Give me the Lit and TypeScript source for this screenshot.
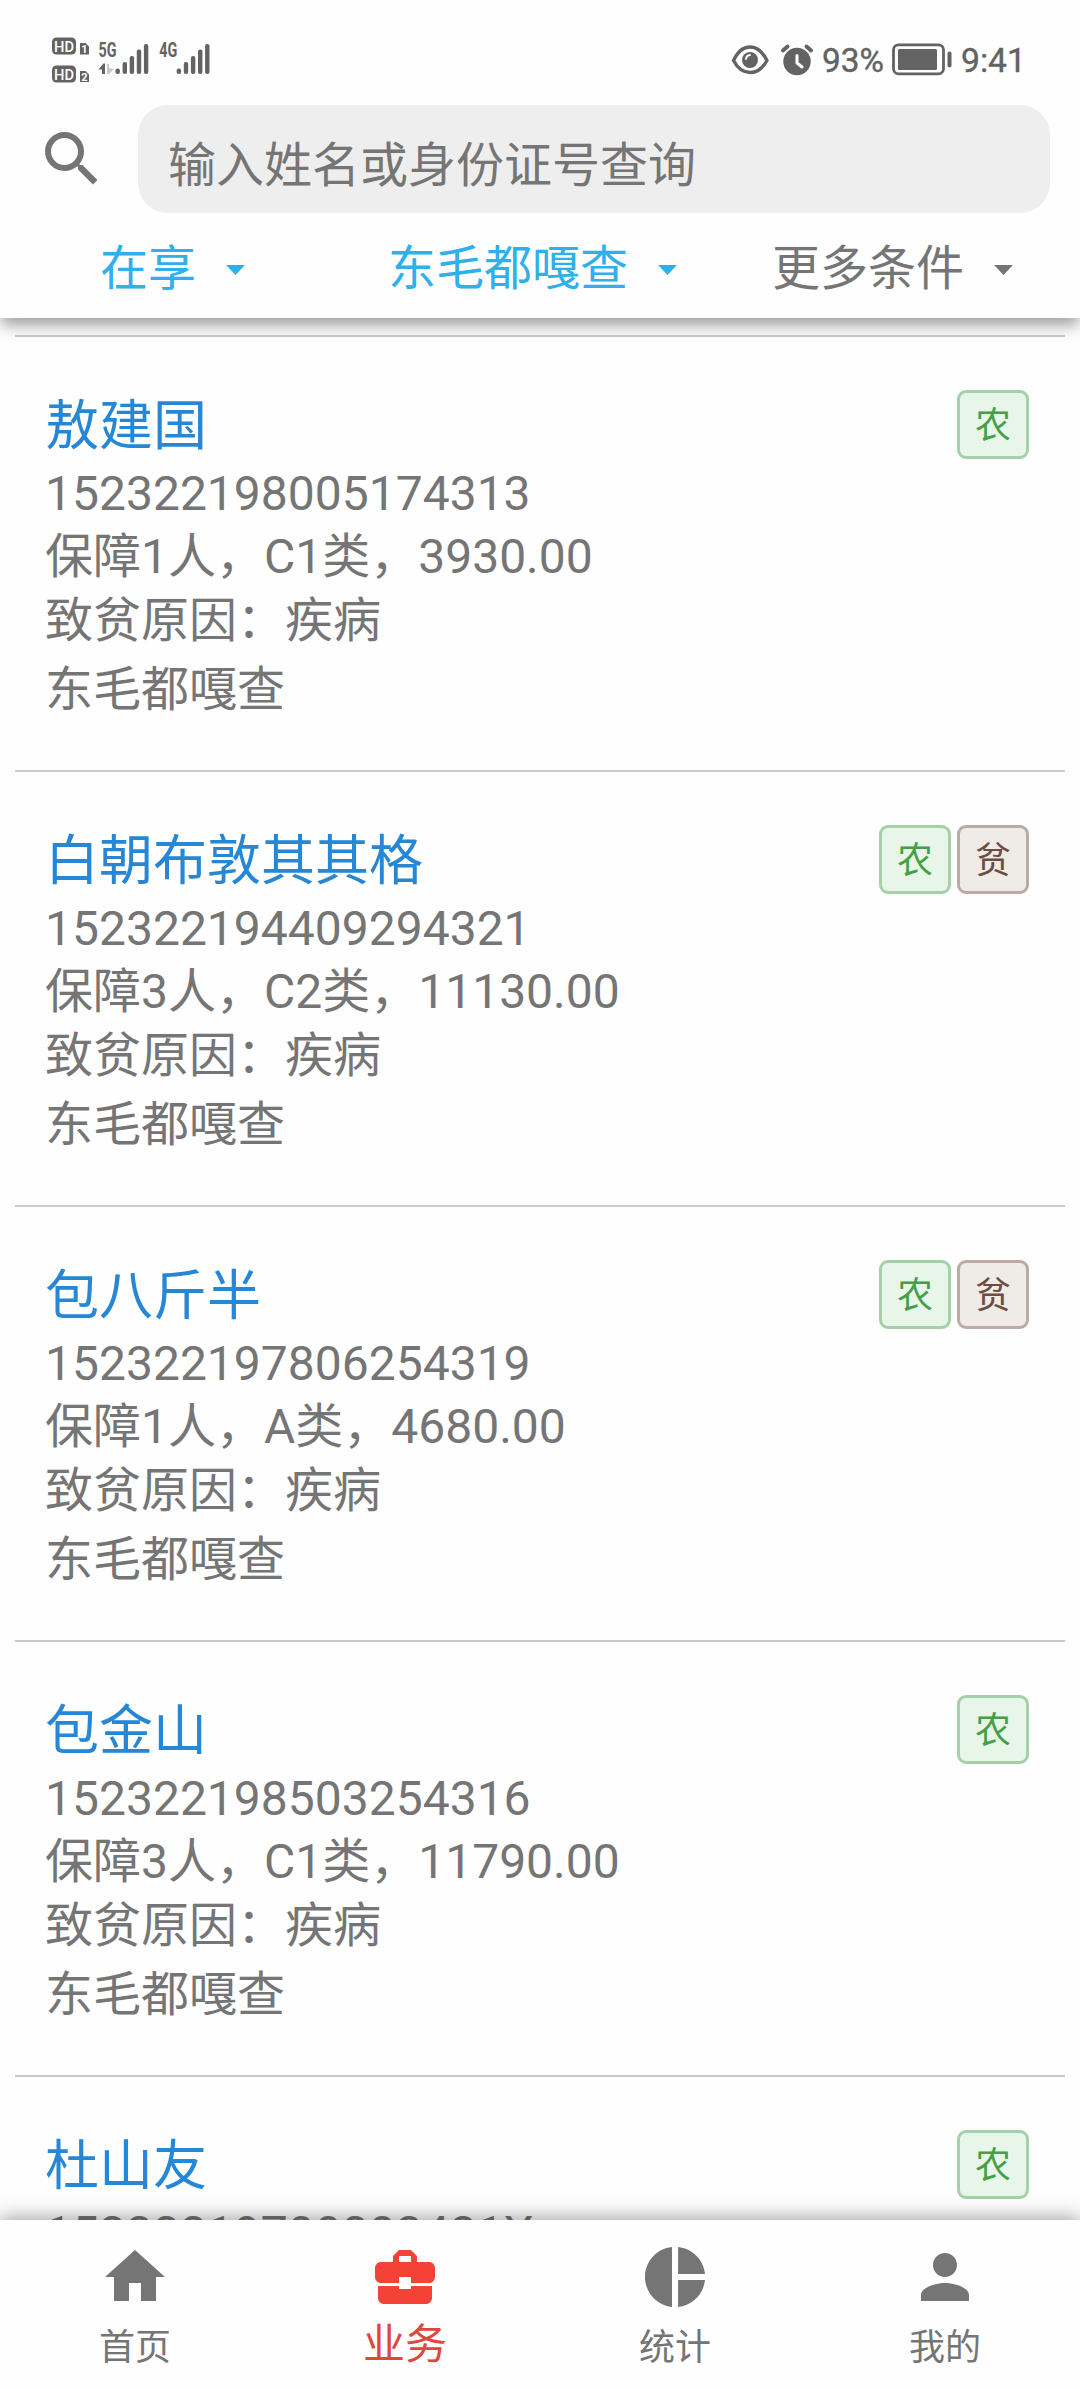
import { LitElement, html, css, svg, nothing } from "lit";
import { customElement, property } from "lit/decorators.js";

interface Person {
  name: string;
  id: string;
  summary?: string;
  reason?: string;
  place?: string;
  tags: string[];
}

const people: Person[] = [
  { name: "敖建国", id: "152322198005174313", summary: "保障1人，C1类，3930.00", reason: "疾病", place: "东毛都嘎查", tags: ["农"] },
  { name: "白朝布敦其其格", id: "152322194409294321", summary: "保障3人，C2类，11130.00", reason: "疾病", place: "东毛都嘎查", tags: ["农", "贫"] },
  { name: "包八斤半", id: "152322197806254319", summary: "保障1人，A类，4680.00", reason: "疾病", place: "东毛都嘎查", tags: ["农", "贫"] },
  { name: "包金山", id: "152322198503254316", summary: "保障3人，C1类，11790.00", reason: "疾病", place: "东毛都嘎查", tags: ["农"] },
  { name: "杜山友", id: "15232219700203431X", tags: ["农"] },
];

const tabs = [
  { label: "首页", path: "M10 20v-6h4v6h5v-8h3L12 3 2 12h3v8z" },
  { label: "业务", active: true, path: "M10 16v-1H3.01L3 19c0 1.11.89 2 2 2h14c1.11 0 2-.89 2-2v-4h-7v1h-4zm10-9h-4.01V5l-2-2h-4l-2 2v2H4c-1.1 0-2 .9-2 2v3c0 1.11.89 2 2 2h6v-2h4v2h6c1.1 0 2-.9 2-2V9c0-1.1-.9-2-2-2zm-6 0h-4V5h4v2z" },
  { label: "统计", path: "M11 2v20c-5.07-.5-9-4.79-9-10s3.93-9.5 9-10zm2.03 0v8.99H22c-.47-4.74-4.24-8.52-8.97-8.99zm0 11.01V22c4.74-.47 8.5-4.25 8.97-8.99h-8.97z" },
  { label: "我的", path: "M12 12c2.21 0 4-1.79 4-4s-1.79-4-4-4-4 1.79-4 4 1.79 4 4 4zm0 2c-2.67 0-8 1.34-8 4v2h16v-2c0-2.66-5.33-4-8-4z" },
];

/** Five signal bars with rounded ends, the left edge of the first at x. */
const bars = (x: number) =>
  [5.5, 12, 18, 24.5, 30].map(
    (h, i) => svg`<rect x=${x + i * 7.1} y=${74 - h} width="4.4" height=${h} rx="2" />`
  );

@customElement("status-bar")
export class StatusBar extends LitElement {
  static styles = css`
    :host { display: block; height: 105px; }
    svg { display: block; }
    .t { font-family: Roboto, sans-serif; }
    .net { font-family: Roboto, sans-serif; font-weight: 700; font-size: 20px; }
  `;
  render() {
    return html`<svg width="1080" height="105" fill="#636363">
      <rect x="52" y="37.5" width="24" height="17" rx="4.5" />
      <rect x="52" y="65.5" width="24" height="17" rx="4.5" />
      <g class="t" font-size="15.500" font-weight="500" fill="#fff">
        <text x="54" y="51.6" textLength="20" lengthAdjust="spacingAndGlyphs">HD</text>
        <text x="54" y="79.6" textLength="20" lengthAdjust="spacingAndGlyphs">HD</text>
      </g>
      <path d="M80 43h5.500l3.500 3.500V54.500h-9zM80 71h5.500l3.500 3.500V82h-9z" />
      <g class="t" font-size="11" font-weight="700" fill="#fff">
        <text x="81.200" y="52.900">1</text>
        <text x="81.200" y="80.700">2</text>
      </g>
      <text class="net" x="98.500" y="57.300" textLength="18" lengthAdjust="spacingAndGlyphs">5G</text>
      <text class="net" x="159.300" y="57.300" textLength="18" lengthAdjust="spacingAndGlyphs">4G</text>
      <path d="M98.500 69.500l5-6h1.500v10.500h-3v-4.500z" />
      <path d="M107 64h2v4l5 1-5 5h-2z" fill="#c8c8c8" />
      ${bars(115.500)} ${bars(176.700)}
      <path d="M733.500 60.500C742 42.500 758 42.500 767 60.500C758 76.500 742 76.500 733.500 60.500Z" fill="none" stroke="#636363" stroke-width="3.400" stroke-linejoin="round" />
      <circle cx="750" cy="60" r="8" />
      <path d="M746 59a4.500 4.500 0 0 1 4-4" fill="none" stroke="#fff" stroke-width="1.800" stroke-linecap="round" />
      <circle cx="797" cy="61.500" r="13.700" />
      <path d="M783 50.500l4.500-4M811 50.500l-4.500-4" stroke="#636363" stroke-width="4" stroke-linecap="round" />
      <path d="M797 55.500v7.500l5 4" fill="none" stroke="#fff" stroke-width="3" stroke-linecap="round" />
      <text class="t" x="822" y="71.500" font-size="34" textLength="62" lengthAdjust="spacingAndGlyphs" stroke="#636363" stroke-width=".4">93%</text>
      <rect x="893.500" y="44.800" width="50" height="29" rx="5" fill="none" stroke="#636363" stroke-width="2.800" />
      <rect x="898" y="49" width="39" height="21" rx="1.500" />
      <rect x="947.500" y="51.500" width="4" height="16" rx="2" />
      <text class="t" x="961" y="71.500" font-size="34" textLength="65" lengthAdjust="spacingAndGlyphs" stroke="#636363" stroke-width=".4">9:41</text>
    </svg>`;
  }
}

@customElement("person-row")
export class PersonRow extends LitElement {
  @property({ attribute: false }) person!: Person;
  static styles = css`
    :host {
      display: flex;
      box-sizing: border-box;
      height: 435px;
      margin: 0 15px;
      padding: 48px 36px 0 30px;
      border-top: 2px solid #cacaca;
      color: #757575;
      font-size: 48px;
      white-space: nowrap;
    }
    .info { flex: 1; }
    .name { height: 77px; line-height: 84px; font-size: 54px; color: #2587d6; }
    .line { height: 63px; line-height: 63px; }
    .reason { height: 65px; line-height: 66px; }
    .place { height: 74px; line-height: 74px; }
    .tags { display: flex; gap: 6px; padding-top: 5px; }
    .tag {
      box-sizing: border-box;
      width: 72px;
      height: 69px;
      border: 3px solid #a5d1a9;
      border-radius: 9px;
      background: #e8f5e9;
      color: #43a047;
      font-size: 36px;
      line-height: 66px;
      text-align: center;
    }
    .poor { border-color: #bcaaa4; background: #efebe7; color: #6d4c41; }
  `;
  render() {
    const p = this.person;
    return html`
      <div class="info">
        <div class="name">${p.name}</div>
        <div class="line">${p.id}</div>
        ${p.summary ? html`<div class="line">${p.summary}</div>` : nothing}
        ${p.reason ? html`<div class="reason">致贫原因：${p.reason}</div>` : nothing}
        ${p.place ? html`<div class="place">${p.place}</div>` : nothing}
      </div>
      <div class="tags">
        ${p.tags.map((t) => html`<div class="tag ${t === "贫" ? "poor" : ""}">${t}</div>`)}
      </div>
    `;
  }
}

@customElement("app-root")
export class AppRoot extends LitElement {
  static styles = css`
    :host {
      display: flex;
      flex-direction: column;
      width: 1080px;
      height: 2388px;
      overflow: hidden;
      background: #fefefe;
      font-family: Roboto, "Noto Sans CJK SC", sans-serif;
      color: #757575;
    }
    .top {
      position: relative;
      z-index: 1;
      flex: none;
      height: 318px;
      background: #fefefe;
      box-shadow: 0 12px 15px -3px rgba(0, 0, 0, 0.2), 0 6px 12px rgba(0, 0, 0, 0.2);
    }
    .search { display: flex; align-items: center; height: 108px; padding: 0 30px 0 36px; }
    .search svg { width: 72px; height: 72px; fill: #757575; }
    .box {
      flex: 1;
      height: 108px;
      margin-left: 30px;
      padding-left: 30px;
      box-sizing: border-box;
      border-radius: 30px;
      background: #eee;
      font-size: 48px;
      line-height: 121px;
    }
    .filters { display: flex; height: 105px; padding: 0 67px 0 100px; }
    .filter { display: flex; align-items: center; gap: 30px; font-size: 48px; line-height: 110px; padding-top: 6px; }
    .filter + .filter { margin-left: 143px; }
    .filter + .filter + .filter { margin-left: auto; }
    .filter svg { width: 19px; height: 10px; margin-top: 3px; fill: currentColor; }
    .on { color: #2fb0ea; }
    .list { flex: 1; overflow: hidden; padding-top: 17px; }
    .nav {
      position: relative;
      z-index: 1;
      flex: none;
      display: flex;
      height: 168px;
      background: #fefefe;
      box-shadow: 0 -3px 18px rgba(0, 0, 0, 0.35);
    }
    .tab { flex: 1; display: flex; flex-direction: column; align-items: center; padding-top: 21px; }
    .tab svg { width: 72px; height: 72px; fill: currentColor; }
    .tab span { font-size: 36px; line-height: 70px; }
    .active { color: #f44336; }
    .tab.active span { font-size: 42px; line-height: 63px; color: #e0463c; }
  `;

  filter(label: string, on: boolean) {
    return html`<div class="filter ${on ? "on" : ""}">
      ${label}<svg viewBox="0 0 10 5" preserveAspectRatio="none"><path d="M0 0h10L5 5z" /></svg>
    </div>`;
  }

  render() {
    return html`
      <div class="top">
        <status-bar></status-bar>
        <div class="search">
          <svg viewBox="0 0 24 24"><path d="M15.500 14h-.79l-.28-.27A6.471 6.471 0 0 0 16 9.500 6.500 6.500 0 1 0 9.500 16c1.610 0 3.090-.59 4.230-1.570l.27.28v.79l5 4.990L20.490 19l-4.990-5zm-6 0C7.010 14 5 11.990 5 9.500S7.010 5 9.500 5 14 7.010 14 9.500 11.990 14 9.500 14z" /></svg>
          <div class="box">输入姓名或身份证号查询</div>
        </div>
        <div class="filters">
          ${this.filter("在享", true)} ${this.filter("东毛都嘎查", true)} ${this.filter("更多条件", false)}
        </div>
      </div>
      <div class="list">
        ${people.map((p) => html`<person-row .person=${p}></person-row>`)}
      </div>
      <div class="nav">
        ${tabs.map(
          (t) => html`<div class="tab ${t.active ? "active" : ""}">
            <svg viewBox="0 0 24 24"><path d=${t.path} /></svg><span>${t.label}</span>
          </div>`
        )}
      </div>
    `;
  }
}
